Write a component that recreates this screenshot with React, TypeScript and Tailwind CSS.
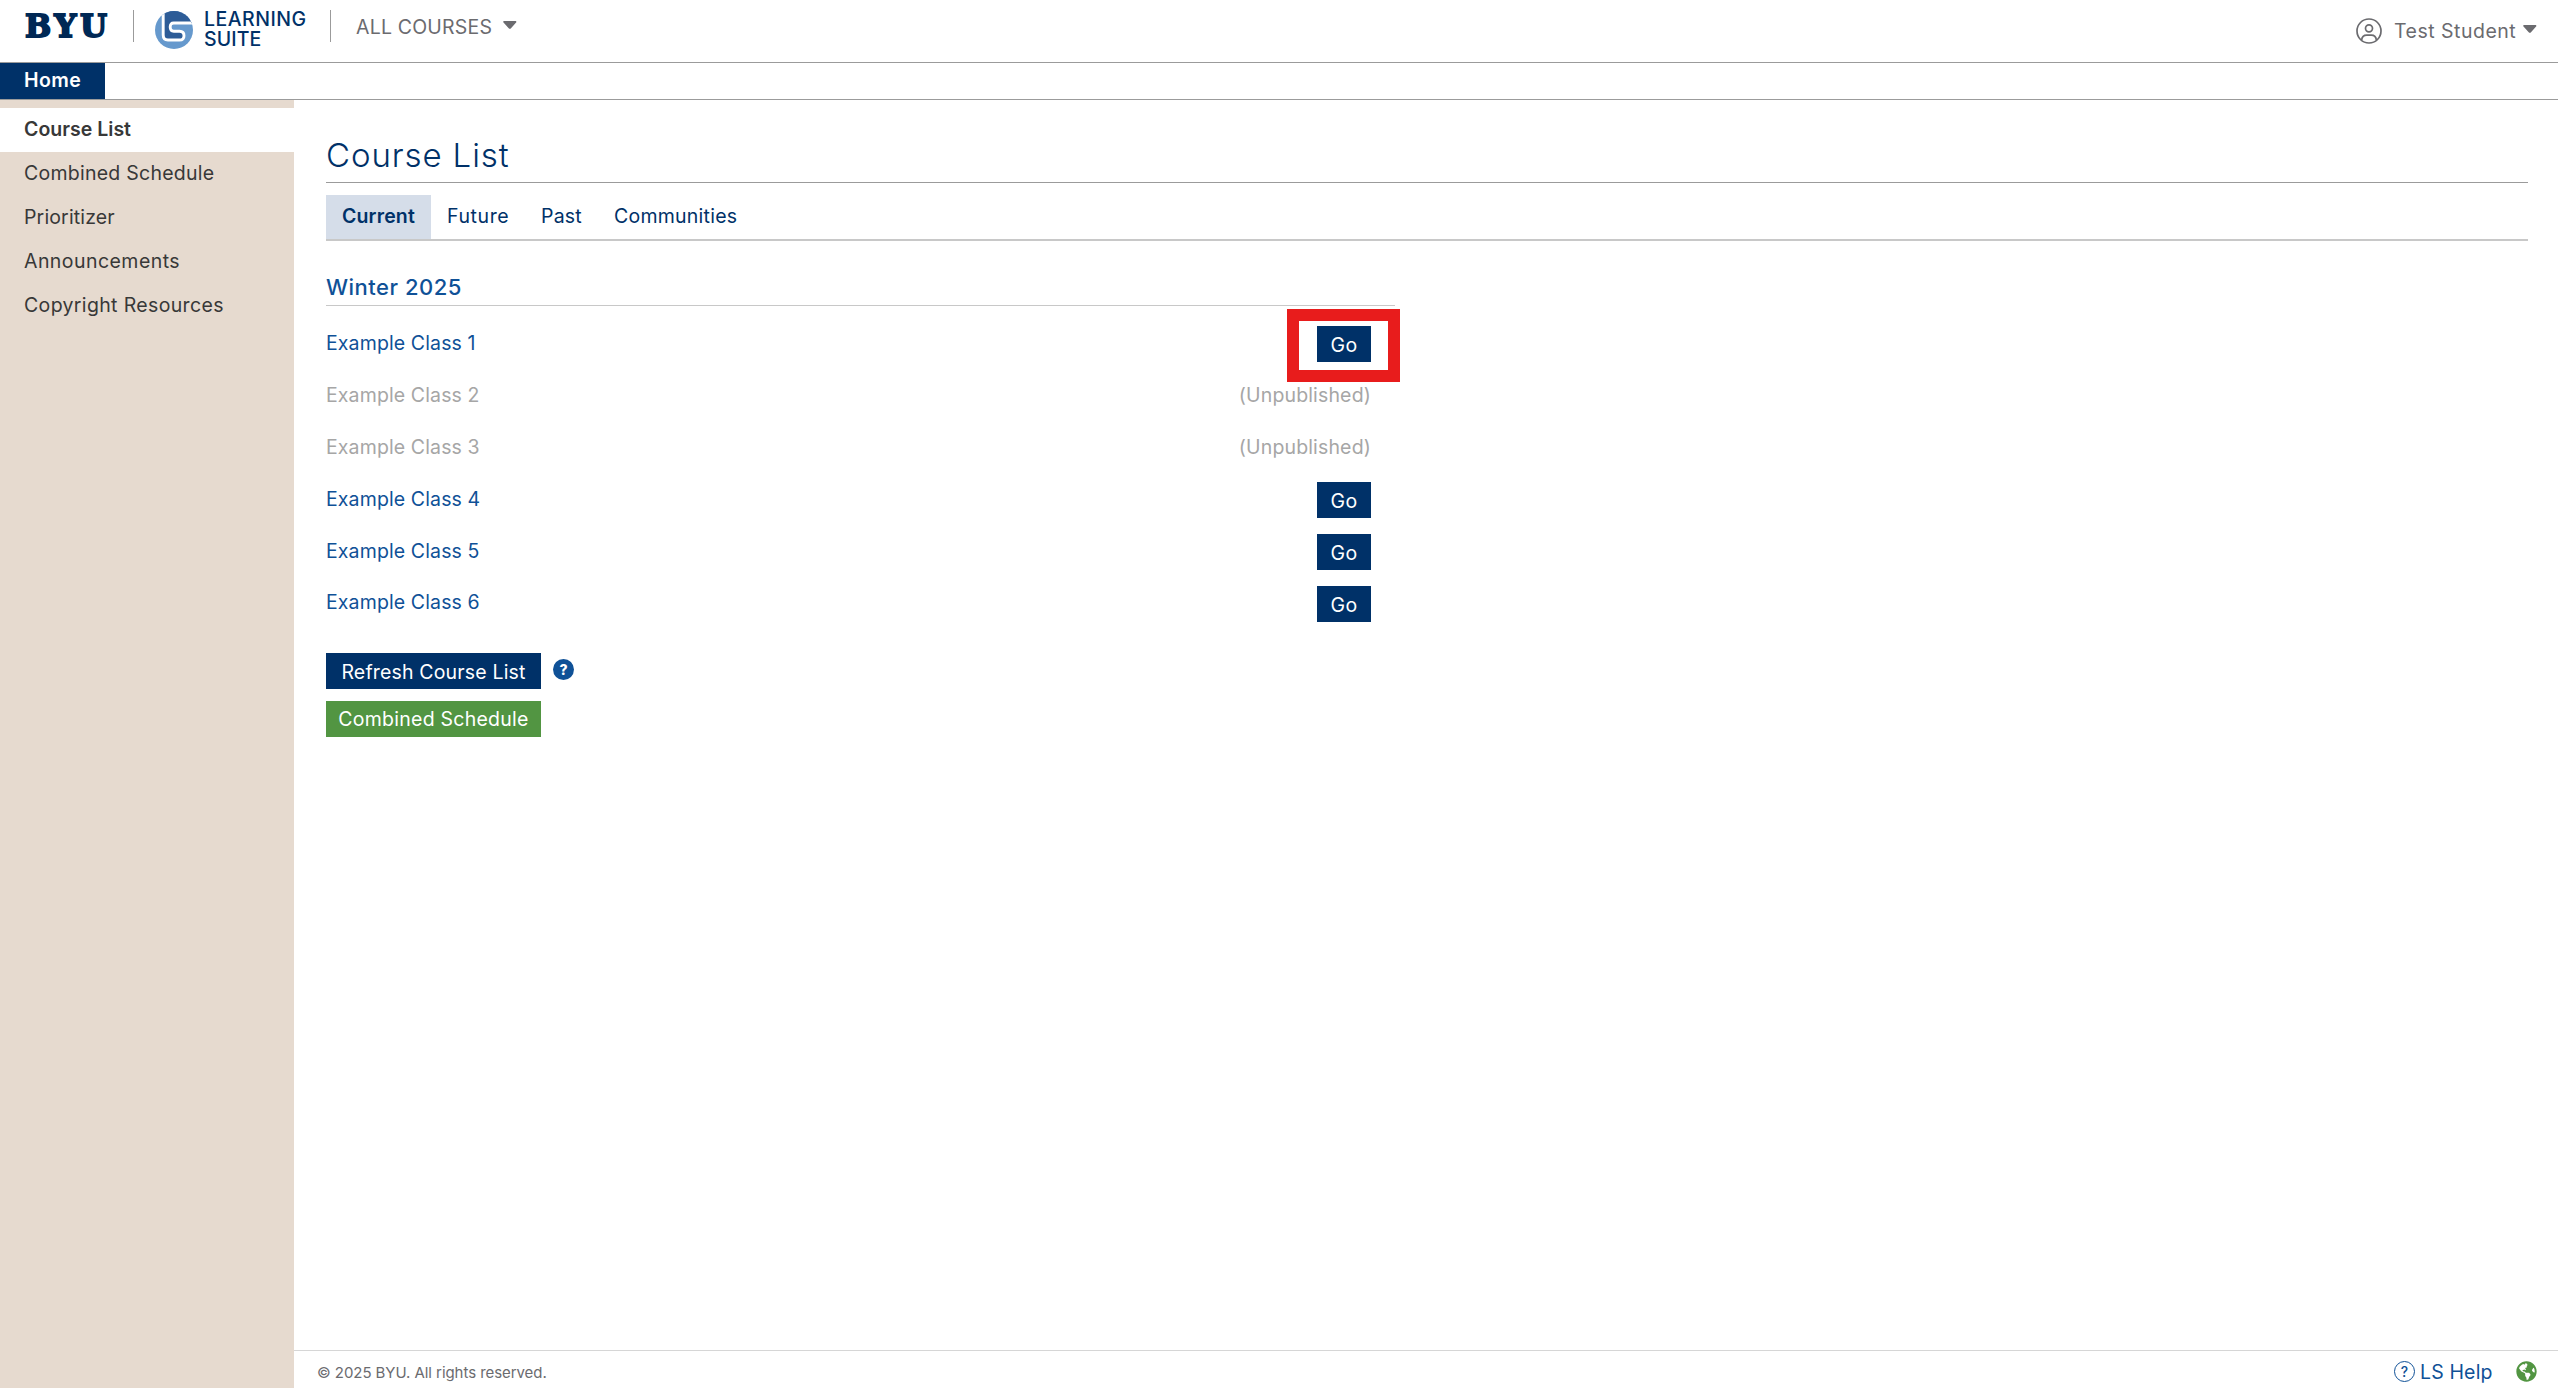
import { FaGlobeAmericas } from "react-icons/fa";

const sideLinks = [
  { label: "Course List", className: "bg-white font-semibold tracking-[0.02px]" },
  { label: "Combined Schedule", className: "font-[370] tracking-[0.25px]" },
  { label: "Prioritizer", className: "font-[370] tracking-[0.15px]" },
  { label: "Announcements", className: "font-[370] tracking-[0.45px]" },
  { label: "Copyright Resources", className: "font-[370] tracking-[0.35px]" },
];

const tabs = [
  { label: "Current", className: "w-[105px] bg-[#d5dde9] font-semibold tracking-[0.15px]" },
  { label: "Future", className: "w-[94px] font-[370] tracking-[0.6px]" },
  { label: "Past", className: "w-[73px] font-[370] tracking-[0.2px]" },
  { label: "Communities", className: "w-[155px] font-[370] tracking-[0.24px]" },
];

const courses = [
  { name: "Example Class 1", published: true, highlighted: true },
  { name: "Example Class 2", published: false },
  { name: "Example Class 3", published: false },
  { name: "Example Class 4", published: true },
  { name: "Example Class 5", published: true },
  { name: "Example Class 6", published: true },
];

function Caret() {
  return (
    <svg width="14" height="8" viewBox="0 0 14 8" fill="#6b6b6f">
      <path d="M1.2 0h11.2c.9 0 1.3 1 .7 1.6L8 7.3c-.6.7-1.7.7-2.3 0L.5 1.6C-.1 1 .3 0 1.200 0z" />
    </svg>
  );
}

function LearningSuiteMark() {
  return (
    <svg className="mt-[11px] ml-[21px]" width="38" height="38" viewBox="0 0 38 38">
      <defs>
        <clipPath id="mark">
          <circle cx="19" cy="19" r="19" />
        </clipPath>
      </defs>
      <g clipPath="url(#mark)">
        <rect width="38" height="38" fill="#6699cd" />
        <path
          d="M8.200-2V24Q8.200 29 13 29H24.500Q29 29 29 24.700T24.500 20.300H18.800Q15.200 20.300 15.200 16.100T18.800 12H40V-2Z"
          fill="#2d5c97"
          stroke="#fff"
          strokeWidth="2.900"
        />
      </g>
    </svg>
  );
}

function UserIcon() {
  return (
    <svg width="26" height="26" viewBox="0 0 26 26" fill="none" stroke="#6b6b6f" strokeWidth="1.700">
      <circle cx="13" cy="13" r="12" />
      <circle cx="13" cy="10.300" r="3.500" />
      <path d="M5.600 22.200C5.900 18.800 8 17.100 10.800 17.100h4.400c2.800 0 4.900 1.700 5.200 5.100" />
    </svg>
  );
}

export default function App() {
  return (
    <div className="flex h-[1388px] w-[2558px] flex-col overflow-hidden bg-white font-['Inter',sans-serif] text-[19.5px] leading-none">
      <header className="flex h-[63px] shrink-0 items-start border-b border-[#9b9b9b] text-[#6b6b6f]">
        <div className="ml-[25px] w-[87px] pt-[10px] font-['DejaVu_Serif',serif] text-[31px] leading-8 font-bold tracking-[3.6px] text-[#002855] [-webkit-text-stroke:1.8px_#002855]">
          BYU
        </div>
        <div className="mt-[10px] ml-[21px] h-8 w-px bg-[#9b9b9b]" />
        <LearningSuiteMark />
        <div className="mt-[9px] ml-[11px] w-[105px] leading-5 font-medium text-[#003168]">
          <div className="tracking-[0.5px]">LEARNING</div>
          <div className="tracking-[0.1px]">SUITE</div>
        </div>
        <div className="mt-[10px] ml-[21px] h-8 w-px bg-[#9b9b9b]" />
        <div className="mt-[17px] ml-[25px] w-[147px] leading-5 font-[370] tracking-[0.2px]">ALL COURSES</div>
        <div className="mt-[21px]">
          <Caret />
        </div>
        <div className="mt-[18px] ml-auto">
          <UserIcon />
        </div>
        <div className="mt-[21px] ml-3 w-[129px] leading-5 font-[370] tracking-[0.5px]">Test Student</div>
        <div className="mt-[25px] mr-[21px]">
          <Caret />
        </div>
      </header>

      <nav className="flex h-[37px] shrink-0 border-b border-[#9b9b9b]">
        <div className="w-[105px] bg-[#003168] pl-6 leading-[34px] font-semibold tracking-[0.4px] text-white">
          Home
        </div>
      </nav>

      <div className="flex min-h-0 flex-1">
        <aside className="w-[294px] shrink-0 bg-[#e6dacf] pt-2 text-[#383838]">
          {sideLinks.map((link) => (
            <div key={link.label} className={`h-11 pl-6 leading-[42px] ${link.className}`}>
              {link.label}
            </div>
          ))}
        </aside>

        <div className="flex flex-1 flex-col font-[370]">
          <main className="flex-1 pr-[30px] pl-8">
            <h1 className="h-[83px] border-b border-[#9b9b9b] pt-[35px] text-[33px] leading-10 font-light tracking-[0.9px] text-[#003168]">
              Course List
            </h1>
            <div className="mt-3 flex h-[46px] border-b-2 border-[#c8c8c8] text-[#003168]">
              {tabs.map((tab) => (
                <div key={tab.label} className={`pl-4 leading-[42px] ${tab.className}`}>
                  {tab.label}
                </div>
              ))}
            </div>

            <section className="w-[1069px]">
              <h2 className="h-[65px] border-b border-[#c8c8c8] pt-9 text-[22px] leading-[20px] font-medium tracking-[0.5px] text-[#0f5197]">
                Winter 2025
              </h2>
              <div className="h-[324px] pt-3 pr-6">
                {courses.map((course) => (
                  <div key={course.name} className="flex h-[51.85px] items-center justify-between">
                    <span
                      className={
                        course.published
                          ? "tracking-[0.12px] text-[#0f5197]"
                          : "tracking-[0.12px] text-[#a6a6a6]"
                      }
                    >
                      {course.name}
                    </span>
                    {course.published ? (
                      <span className="relative mt-px h-9 w-[54px] bg-[#003168] text-center leading-[38px] tracking-[0.5px] text-white">
                        Go
                        {course.highlighted && (
                          <span className="absolute -top-[17px] -left-[30px] h-[73px] w-[113px] border-[12.5px] border-[#e81c1c]" />
                        )}
                      </span>
                    ) : (
                      <span className="tracking-[0.15px] text-[#a6a6a6]">(Unpublished)</span>
                    )}
                  </div>
                ))}
              </div>
            </section>

            <div className="mt-[23px] flex items-start gap-3">
              <div className="h-9 w-[215px] bg-[#003168] text-center leading-[38px] tracking-[0.17px] text-white">
                Refresh Course List
              </div>
              <div className="mt-1.5 flex size-[21px] items-center justify-center rounded-full bg-[#0f5197] text-[14px] font-extrabold text-white">
                ?
              </div>
            </div>
            <div className="mt-3 h-9 w-[215px] bg-[#529542] text-center leading-9 tracking-[0.25px] text-white">
              Combined Schedule
            </div>
          </main>

          <footer className="flex h-[38px] items-start border-t border-[#d6d6d6]">
            <div className="mt-[11px] ml-[23px] text-[15px] leading-[21px] tracking-[-0.06px] text-[#6b6b6f]">
              © 2025 BYU. All rights reserved.
            </div>
            <div className="mt-2.5 ml-auto flex size-[21px] items-center justify-center rounded-full border-[1.5px] border-[#0f5197] text-[14px] font-medium text-[#0f5197]">
              ?
            </div>
            <div className="mt-[11px] ml-1 w-[97px] pl-px leading-5 tracking-[0.15px] text-[#0f5197]">LS Help</div>
            <FaGlobeAmericas className="mt-[10px] mr-[21px] size-[21px] text-[#529542]" />
          </footer>
        </div>
      </div>
    </div>
  );
}
